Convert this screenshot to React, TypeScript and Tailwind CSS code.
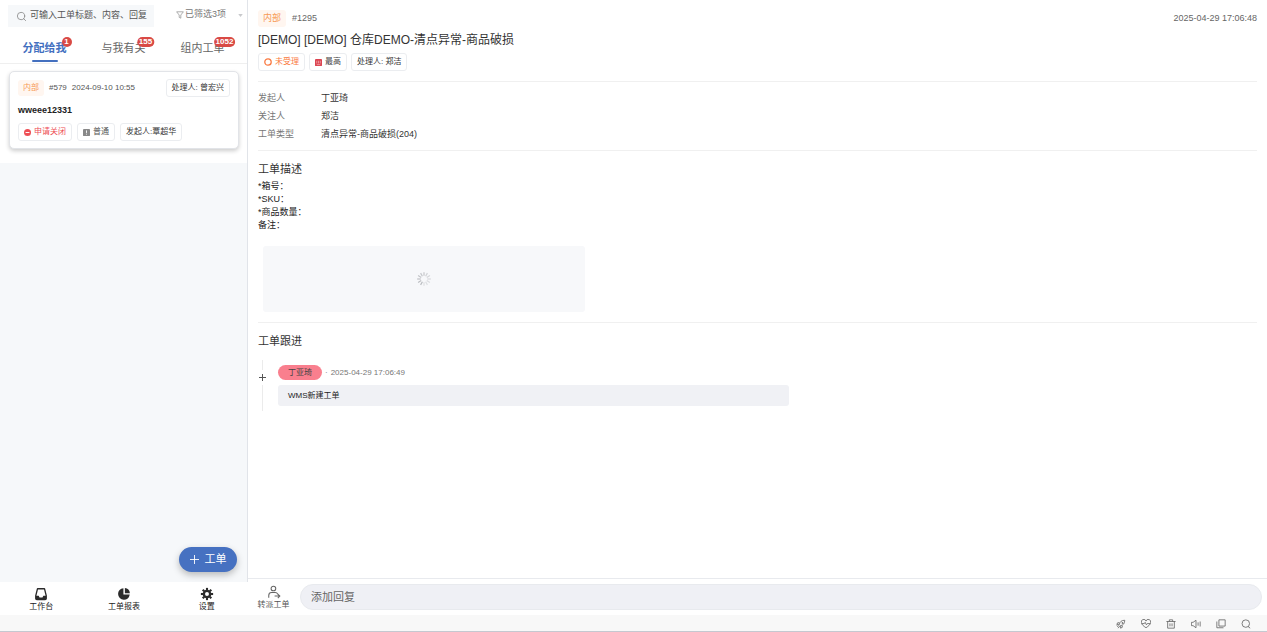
import type { ReactNode } from 'react'
import clsx from 'clsx'
import { Search } from 'lucide-react'

const tabs = [
  { label: '分配给我', count: 1 },
  { label: '与我有关', count: 155 },
  { label: '组内工单', count: 1052 },
]

const details = [
  { label: '发起人', value: '丁亚琦' },
  { label: '关注人', value: '郑洁' },
  { label: '工单类型', value: '清点异常-商品破损(204)' },
]

const descriptionLines = ['*箱号：', '*SKU：', '*商品数量：', '备注：']

const spokes = [0.8, 0.6, 0.55, 0.5, 0.45, 0.4, 0.4, 1, 0.95, 0.9, 0.85, 0.8]

function Chip({ children, className }: { children: ReactNode; className?: string }) {
  return (
    <span
      className={clsx(
        'inline-flex h-[18px] items-center gap-[3px] whitespace-nowrap rounded-[3px] border border-[#ebedf0] bg-white px-[5px] text-[8px]',
        className ?? 'text-[#333]'
      )}
    >
      {children}
    </span>
  )
}

function InternalTag({ className }: { className: string }) {
  return <span className={clsx('flex items-center rounded-[3px] bg-[#fff6f0] px-[5px] text-[#f79a55]', className)}>内部</span>
}

function PriorityIcon({ className, high }: { className: string; high?: boolean }) {
  return (
    <svg viewBox="0 0 8 8" className={clsx('h-[7px] w-[7px]', className)} fill="none">
      <rect width="8" height="8" rx="1" fill="currentColor" />
      {high ? (
        <path d="M2 2v3M4 2v3M6 2v3M2 6.4h4" stroke="#fff" strokeWidth=".8" opacity=".6" />
      ) : (
        <path d="M4 1.6v2.9M4 5.4v1" stroke="#fff" strokeWidth="1" />
      )}
    </svg>
  )
}

function Spinner() {
  return (
    <svg viewBox="0 0 14 14" className="h-[14px] w-[14px]" stroke="#b9bbbf" strokeWidth="1.2">
      {spokes.map((opacity, i) => (
        <path key={i} d="M7 .2v3.600" opacity={opacity} transform={`rotate(${i * 30} 7 7)`} />
      ))}
    </svg>
  )
}

function InboxIcon() {
  return (
    <svg viewBox="0 0 24 24" className="h-[14px] w-[14px]" fill="none">
      <path d="M6 3h12l3 12v4.500a2 2 0 0 1-2 2H5a2 2 0 0 1-2-2V15z" stroke="#2b2b2b" strokeWidth="2.2" strokeLinejoin="round" />
      <path d="M3 15h5l1.500 3h5l1.500-3h5v6H3z" fill="#2b2b2b" />
    </svg>
  )
}

function PieIcon() {
  return (
    <svg viewBox="0 0 24 24" className="h-[14px] w-[14px]" fill="#2b2b2b">
      <path d="M11 2a10 10 0 1 0 10.800 11H11z" />
      <path d="M13.500 1.800a10 10 0 0 1 8.600 8.700h-8.600z" />
    </svg>
  )
}

function GearIcon() {
  return (
    <svg viewBox="0 0 24 24" className="h-[14px] w-[14px]" fill="none" stroke="#2b2b2b">
      <circle cx="12" cy="12" r="5.400" strokeWidth="4" />
      {[0, 45, 90, 135, 180, 225, 270, 315].map((deg) => (
        <path key={deg} d="M12 1.500v4" strokeWidth="3.600" transform={`rotate(${deg} 12 12)`} />
      ))}
    </svg>
  )
}

function TransferIcon() {
  return (
    <svg viewBox="0 0 24 24" className="h-[14px] w-[14px]" fill="none" stroke="#666" strokeWidth="1.8">
      <circle cx="11" cy="6" r="4" />
      <path d="M3 22v-4a5 5 0 0 1 5-5h6a5 5 0 0 1 4.500 3" />
      <path d="M13 19h8.500M18.500 15.500l3.500 3.500-3.500 3.500" />
    </svg>
  )
}

const navItems = [
  { label: '工作台', icon: <InboxIcon /> },
  { label: '工单报表', icon: <PieIcon /> },
  { label: '设置', icon: <GearIcon /> },
]

const statusItems = [
  {
    label: '加速',
    paths: ['M8 13c1-6 5-10 13-10 0 8-4 12-10 13z', 'M8 9H4l-2 4h5M15 16v4l-4 2v-5', 'M7 15l-4 4M9 17l-4 5M4 14l-2 2', 'M14.500 8.500h2v2h-2z'],
  },
  {
    label: '健康',
    paths: ['M12 21C6 17 1 13 1 8.500A5 5 0 0 1 12 5a5 5 0 0 1 11 3.500C23 13 18 17 12 21z', 'M2 11h6l2-3 3 6 2-3h7'],
  },
  { label: '删除', paths: ['M1 6h22M8 6V2h8v4M4 6v16h16V6', 'M9.500 10.500v7M14.500 10.500v7'] },
  { label: '声音', paths: ['M1 8h4l7-5v18l-7-5H1z', 'M17 8v8M22 6v12'] },
  { label: '窗口', paths: ['M7 2h15v15H7z', 'M2 6v15h16'] },
  { label: '搜索', paths: ['M11.500 2a9 9 0 1 0 0 18 9 9 0 1 0 0-18z', 'M17 18l5 4'] },
]

function Sidebar() {
  return (
    <aside className="flex w-[248px] shrink-0 flex-col bg-[#f6f8fa]">
      <div className="flex min-h-0 flex-1 flex-col border-r border-[#e1e4e9]">
        <div className="bg-white pb-[14px]">
          <div className="flex items-start gap-[22px] pl-2 pr-1 pt-[5px]">
            <label className="flex h-[22px] w-[146px] items-center gap-[3px] bg-[#f6f8fa] pl-2 pr-1">
              <Search className="h-[11px] w-[11px] shrink-0 text-[#888]" strokeWidth={1.8} />
              <input
                aria-label="搜索工单"
                placeholder="可输入工单标题、内容、回复"
                className="w-full min-w-0 bg-transparent text-[9px] outline-none placeholder:text-[#555]"
              />
            </label>
            <button type="button" className="flex h-5 flex-1 items-center whitespace-nowrap text-[9px] text-[#777]">
              <svg viewBox="0 0 10 10" className="mr-px h-2 w-2" fill="none" stroke="#999" strokeWidth="1">
                <path d="M.8 1h8.400L6 5v4L4 8V5z" />
              </svg>
              已筛选3项
              <svg viewBox="0 0 6 4" className="ml-auto h-[3px] w-[5px]" fill="#c8c9cc">
                <path d="M0 0h6L3 4z" />
              </svg>
            </button>
          </div>
          <div className="flex h-[37px] border-b border-[#efefef] px-[5px]">
            {tabs.map((tab, i) => (
              <button
                key={tab.label}
                type="button"
                className={clsx(
                  'flex flex-1 flex-col items-center pt-[13px] text-[11px] leading-[16px]',
                  i === 0 ? 'font-bold text-[#4470bf]' : 'text-[#666]'
                )}
              >
                <span className="relative whitespace-nowrap">
                  {tab.label}
                  <span className="absolute -top-[3px] left-full flex h-[10px] min-w-[10px] -translate-x-1/2 items-center justify-center rounded-full bg-[#d94a45] px-[2px] text-[8px] font-bold leading-none text-white">
                    {tab.count}
                  </span>
                </span>
                {i === 0 && <span className="mt-1 h-[2px] w-[26px] shrink-0 rounded-full bg-[#4470bf]" />}
              </button>
            ))}
          </div>
          <article className="ml-[9px] mr-2 mt-[7px] rounded-[5px] border border-[#e2e4e8] bg-white px-2 pb-[7px] pt-[7px] shadow-[0_2px_4px_rgba(0,0,0,0.2)]">
            <div className="flex items-center text-[8px] text-[#555]">
              <InternalTag className="h-4" />
              <span className="ml-[5px]">#579</span>
              <time className="ml-[5px]">2024-09-10 10:55</time>
              <span className="ml-auto flex">
                <Chip>处理人: 曾宏兴</Chip>
              </span>
            </div>
            <h2 className="mt-[6px] text-[9px] font-bold leading-[14px] text-[#222]">wweee12331</h2>
            <div className="mt-[6px] flex gap-[5px]">
              <Chip className="text-[#ee4e55]">
                <svg viewBox="0 0 8 8" className="h-[7px] w-[7px]">
                  <circle cx="4" cy="4" r="4" fill="currentColor" />
                  <path d="M1.800 4h4.400" stroke="#fff" strokeWidth="1.100" />
                </svg>
                申请关闭
              </Chip>
              <Chip className="text-[#555]">
                <PriorityIcon className="text-[#888]" />
                普通
              </Chip>
              <Chip>发起人:覃超华</Chip>
            </div>
          </article>
        </div>
        <button
          type="button"
          className="mb-[10px] mr-[10px] mt-auto flex h-[25px] w-[58px] items-center justify-center gap-[6px] self-end rounded-full bg-[#4671c1] text-[11px] text-white shadow-[0_3px_7px_rgba(0,0,0,0.25)]"
        >
          <svg viewBox="0 0 10 10" className="h-[9px] w-[9px]" stroke="#fff" strokeWidth="1">
            <path d="M5 0v10M0 5h10" />
          </svg>
          工单
        </button>
      </div>
      <nav className="flex h-[33px] shrink-0 bg-white">
        {navItems.map((item) => (
          <a key={item.label} href="#" className="flex flex-1 flex-col items-center pt-[5px] text-[8px] leading-[12px] text-[#222]">
            {item.icon}
            {item.label}
          </a>
        ))}
      </nav>
    </aside>
  )
}

function TicketDetail() {
  return (
    <main className="flex min-w-0 flex-1 flex-col bg-white">
      <div className="min-h-0 flex-1 overflow-hidden px-[10px] pt-[10px]">
        <header className="border-b border-[#f0f0f0] pb-[10px]">
          <div className="flex h-[17px] items-center text-[9px] text-[#666]">
            <InternalTag className="h-[17px]" />
            <span className="ml-[6px]">#1295</span>
            <time className="ml-auto">2025-04-29 17:06:48</time>
          </div>
          <h1 className="mt-1 text-[12px] leading-[18px] text-[#333]">[DEMO] [DEMO] 仓库DEMO-清点异常-商品破损</h1>
          <div className="mt-1 flex gap-1">
            <Chip className="text-[#fa7a42]">
              <svg viewBox="0 0 8 8" className="h-2 w-2" fill="none" stroke="currentColor" strokeWidth="1.300">
                <circle cx="4" cy="4" r="3.200" />
              </svg>
              未受理
            </Chip>
            <Chip className="text-[#444]">
              <PriorityIcon className="text-[#dc4450]" high />
              最高
            </Chip>
            <Chip>处理人: 郑洁</Chip>
          </div>
        </header>
        <dl className="border-b border-[#f0f0f0] py-[7px] text-[9px] leading-[18px]">
          {details.map((row) => (
            <div key={row.label} className="flex">
              <dt className="w-[63px] text-[#777]">{row.label}</dt>
              <dd className="text-[#333]">{row.value}</dd>
            </div>
          ))}
        </dl>
        <section className="border-b border-[#f0f0f0] py-[10px]">
          <h2 className="text-[11px] leading-[16px] text-[#333]">工单描述</h2>
          <div className="pt-[3px] text-[9px] leading-[13px] text-[#222]">
            {descriptionLines.map((line) => (
              <p key={line}>{line}</p>
            ))}
          </div>
          <div className="ml-[5px] mt-[14px] flex h-[66px] w-[322px] items-center justify-center rounded-[3px] bg-[#f7f8fa]">
            <Spinner />
          </div>
        </section>
        <section className="pt-[10px]">
          <h2 className="text-[11px] leading-[16px] text-[#333]">工单跟进</h2>
          <div className="mt-[11px] flex gap-[11px]">
            <div className="flex w-[9px] flex-col items-center">
              <span className="h-[10px] w-px bg-[#ebebeb]" />
              <svg viewBox="0 0 7 7" className="my-1 h-[7px] w-[7px] shrink-0" stroke="#555" strokeWidth="1">
                <path d="M3.500 0v7M0 3.500h7" />
              </svg>
              <span className="w-px flex-1 bg-[#ebebeb]" />
            </div>
            <div className="min-w-0 flex-1 py-[5px]">
              <div className="flex items-center text-[8px] text-[#777]">
                <span className="flex h-[15px] items-center rounded-full bg-[#f97f8e] px-[10px] text-[#444]">丁亚琦</span>
                <span className="ml-[3px]">·</span>
                <time className="ml-[3px]">2025-04-29 17:06:49</time>
              </div>
              <p className="mt-[5px] w-[511px] max-w-full rounded-[3px] bg-[#f0f1f5] px-[10px] text-[8px] leading-[21px] text-[#222]">
                WMS新建工单
              </p>
            </div>
          </div>
        </section>
      </div>
      <footer className="flex h-[37px] shrink-0 items-center border-t border-[#e8eaee] pl-[9px] pr-[5px]">
        <button type="button" className="flex w-[33px] flex-col items-center whitespace-nowrap pt-[2px] text-[8px] leading-[12px] text-[#555]">
          <TransferIcon />
          转派工单
        </button>
        <input
          aria-label="添加回复"
          placeholder="添加回复"
          className="ml-[10px] h-[26px] min-w-0 flex-1 rounded-full border border-[#e8eaee] bg-[#eff0f5] px-[10px] text-[11px] outline-none placeholder:text-[#666]"
        />
      </footer>
    </main>
  )
}

export default function App() {
  return (
    <div className="flex h-screen flex-col overflow-hidden bg-white font-['Liberation_Sans','Noto_Sans_CJK_SC',sans-serif]">
      <div className="flex min-h-0 flex-1">
        <Sidebar />
        <TicketDetail />
      </div>
      <div className="flex h-[17px] shrink-0 items-center justify-end gap-[15px] border-b border-[#c5c8d0] bg-[#f8f8f8] pr-4 pt-px">
        {statusItems.map((item) => (
          <button key={item.label} type="button" aria-label={item.label}>
            <svg viewBox="0 0 24 24" className="h-[10px] w-[10px]" fill="none" stroke="#666" strokeWidth="2">
              {item.paths.map((d) => (
                <path key={d} d={d} />
              ))}
            </svg>
          </button>
        ))}
      </div>
    </div>
  )
}
